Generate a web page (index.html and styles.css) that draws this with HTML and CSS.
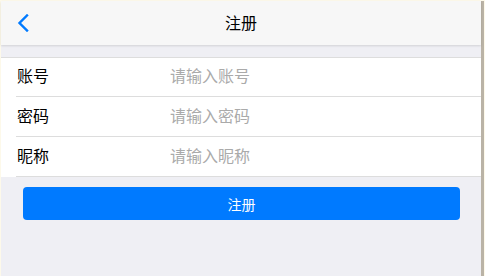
FILE: index.html
```html
<!DOCTYPE html>
<html lang="zh">
<head>
<meta charset="utf-8">
<title>注册</title>
<link rel="stylesheet" href="styles.css">
</head>
<body>
<div class="frame">
  <header class="nav">
    <a class="back" href="#" aria-label="返回">
      <svg width="12" height="18" viewBox="0 0 12 18"><path d="M10 1.5 L2.5 9 L10 16.5" fill="none" stroke="#007aff" stroke-width="2.4" stroke-linecap="square"/></svg>
    </a>
    <h1 class="title">注册</h1>
  </header>
  <main class="content">
    <ul class="form">
      <li class="row"><span class="label">账号</span><span class="input">请输入账号</span></li>
      <li class="row"><span class="label">密码</span><span class="input">请输入密码</span></li>
      <li class="row"><span class="label">昵称</span><span class="input">请输入昵称</span></li>
    </ul>
    <button class="submit">注册</button>
  </main>
</div>
</body>
</html>
```
FILE: styles.css
```css
html, body {
  margin: 0;
  padding: 0;
  background: #fdf9ea;
  font-family: "Noto Sans CJK SC", "Noto Sans", sans-serif;
}
.frame {
  margin: 1px 0 0 1px;
  width: 480px;
  height: 275px;
  background: #efeff4;
  border-right: 3px solid #bab3a6;
  display: flex;
  flex-direction: column;
}
.nav {
  position: relative;
  height: 44px;
  background: #f7f7f7;
  box-shadow: 0 1px 2px rgba(0, 0, 0, 0.12);
  display: flex;
  align-items: center;
  justify-content: center;
  z-index: 1;
}
.back {
  position: absolute;
  left: 16px;
  top: 13px;
  width: 12px;
  height: 18px;
  display: block;
}
.back svg { display: block; }
.title {
  margin: 0;
  font-size: 16px;
  font-weight: normal;
  color: #000;
  line-height: 20px;
  margin-top: -3px;
}
.content {
  padding-top: 12px;
}
.form {
  list-style: none;
  margin: 0;
  padding: 0 0 0 15px;
  background: #fff;
  border-top: 1px solid #dddddd;
}
.row {
  display: flex;
  height: 39px;
  box-sizing: border-box;
  border-bottom: 1px solid #dddddd;
  align-items: flex-start;
  padding-top: 6px;
  font-size: 16px;
  line-height: 22px;
}
.label {
  width: 153px;
  padding-left: 1px;
  color: #000;
}
.input {
  color: #aaaaaa;
}
.row:first-child { height: 39px; padding-top: 6px; }
.row + .row { height: 40px; padding-top: 7px; }
.submit {
  display: block;
  margin: 10px 21px 0 22px;
  width: calc(100% - 43px);
  height: 33px;
  border: none;
  border-radius: 4px;
  background: #007aff;
  color: #fff;
  font-family: "Noto Sans CJK SC", "Noto Sans", sans-serif;
  font-size: 14px;
  line-height: 20px;
  padding: 0;
}
```
